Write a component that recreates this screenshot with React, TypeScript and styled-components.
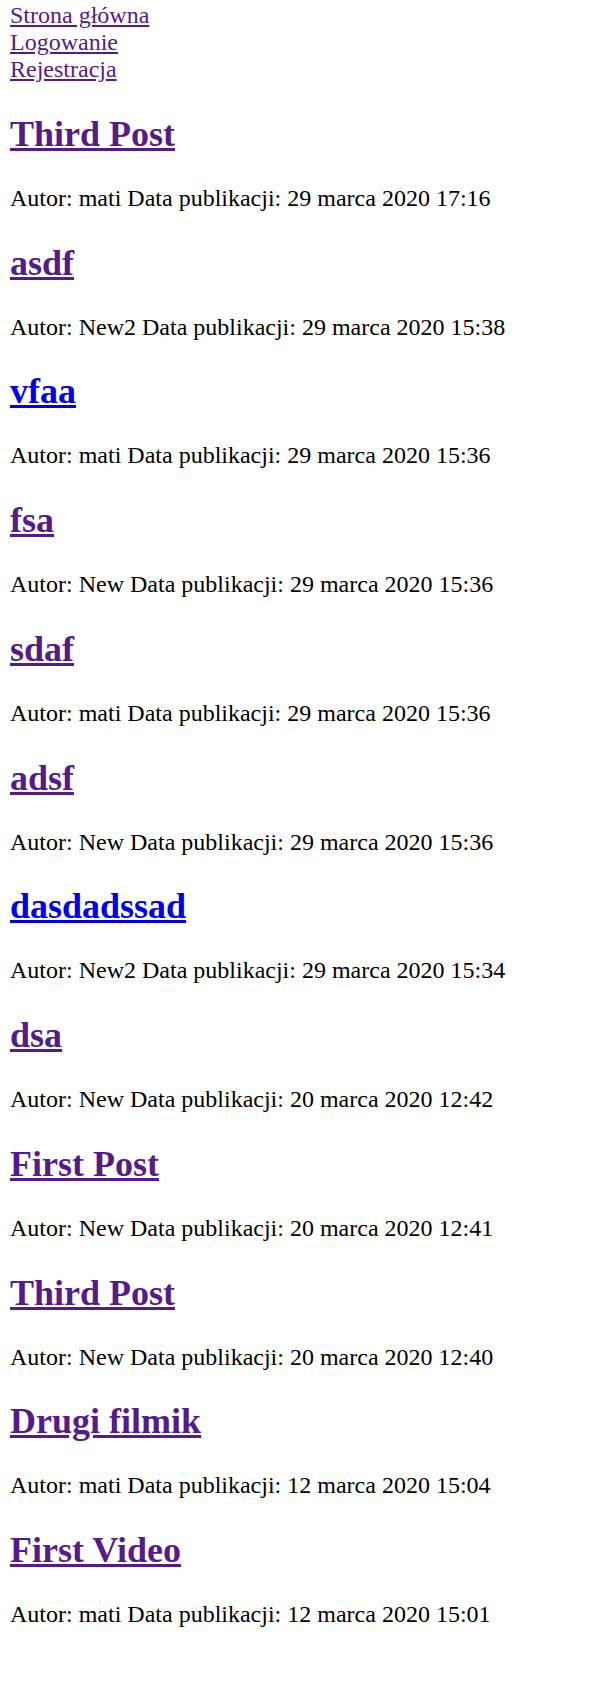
import React from "react";
import styled, { createGlobalStyle } from "styled-components";

const Global = createGlobalStyle`
  html, body { background: #ffffff; }
  body {
    margin: 0 10px;
    padding-top: 2px;
    font-family: "Liberation Serif", "Times New Roman", serif;
    font-size: 24px;
    color: #000000;
  }
`;

const Nav = styled.nav`
  display: flex;
  flex-direction: column;
  align-items: flex-start;
  margin-bottom: 1px;
`;

const NavLink = styled.a`
  color: #551a8b;
  text-decoration: underline;
  font-size: 24px;
`;

const Title = styled.h2`
  font-size: 36px;
  font-weight: bold;
  margin: 29.88px 0;
`;

const TitleLink = styled.a<{ $visited: boolean }>`
  color: ${(p) => (p.$visited ? "#551a8b" : "#0000ee")};
  text-decoration: underline;
`;

const Meta = styled.p`
  margin: 24px 0;
  font-size: 24px;
`;

type Post = { title: string; author: string; date: string; visited: boolean };

const posts: Post[] = [
  { title: "Third Post", author: "mati", date: "29 marca 2020 17:16", visited: true },
  { title: "asdf", author: "New2", date: "29 marca 2020 15:38", visited: true },
  { title: "vfaa", author: "mati", date: "29 marca 2020 15:36", visited: false },
  { title: "fsa", author: "New", date: "29 marca 2020 15:36", visited: true },
  { title: "sdaf", author: "mati", date: "29 marca 2020 15:36", visited: true },
  { title: "adsf", author: "New", date: "29 marca 2020 15:36", visited: true },
  { title: "dasdadssad", author: "New2", date: "29 marca 2020 15:34", visited: false },
  { title: "dsa", author: "New", date: "20 marca 2020 12:42", visited: true },
  { title: "First Post", author: "New", date: "20 marca 2020 12:41", visited: true },
  { title: "Third Post", author: "New", date: "20 marca 2020 12:40", visited: true },
  { title: "Drugi filmik", author: "mati", date: "12 marca 2020 15:04", visited: true },
  { title: "First Video", author: "mati", date: "12 marca 2020 15:01", visited: true },
];

export default function App() {
  return (
    <>
      <Global />
      <Nav>
        <NavLink href="#">Strona główna</NavLink>
        <NavLink href="#">Logowanie</NavLink>
        <NavLink href="#">Rejestracja</NavLink>
      </Nav>
      {posts.map((p, i) => (
        <article key={i}>
          <Title>
            <TitleLink href="#" $visited={p.visited}>
              {p.title}
            </TitleLink>
          </Title>
          <Meta>
            Autor: {p.author} Data publikacji: {p.date}
          </Meta>
        </article>
      ))}
    </>
  );
}
